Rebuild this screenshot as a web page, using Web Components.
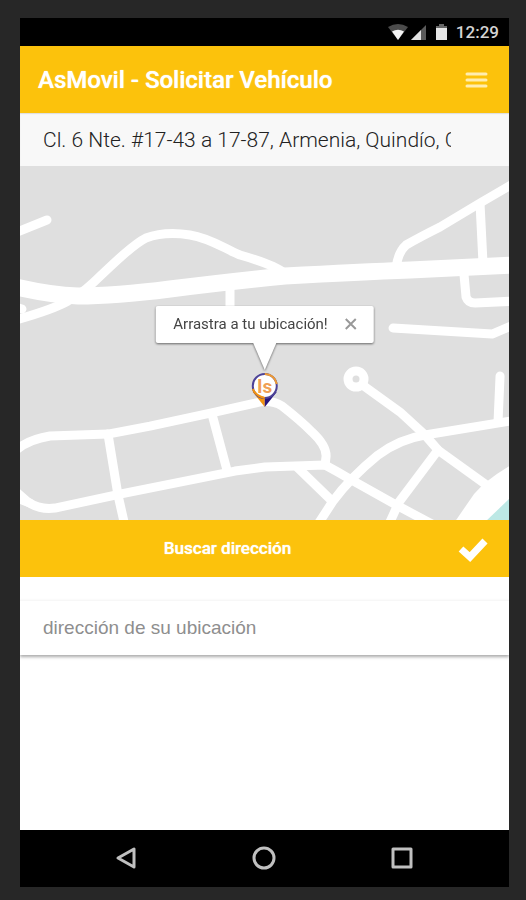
<!DOCTYPE html>
<html lang="es">
<head>
<meta charset="utf-8">
<meta name="viewport" content="width=device-width, initial-scale=1">
<title>AsMovil - Solicitar Vehículo</title>
<style>
  html, body { margin: 0; }
  body { background: #272727; font-family: Roboto, "Liberation Sans", sans-serif; --brand: #fcc20c; }
</style>
</head>
<body>
<as-phone>
  <status-bar slot="status" time="12:29"></status-bar>
  <app-header>AsMovil - Solicitar Vehículo</app-header>
  <address-bar value="Cl. 6 Nte. #17-43 a 17-87, Armenia, Quindío, Colombia"></address-bar>
  <city-map><map-popup slot="marker">Arrastra a tu ubicación!</map-popup><map-pin slot="marker"></map-pin></city-map>
  <search-bar>Buscar dirección</search-bar>
  <address-form placeholder="dirección de su ubicación"></address-form>
  <nav-bar slot="nav"></nav-bar>
</as-phone>

<script>
const define = (name, html, setup) => {
  const template = document.createElement('template');
  template.innerHTML = '<style>*{box-sizing:border-box}button{background:none;border:0;padding:0;color:inherit;font:inherit;cursor:pointer}svg{display:block}</style>' + html;
  customElements.define(name, class extends HTMLElement {
    constructor() {
      super();
      this.attachShadow({ mode: 'open' }).append(template.content.cloneNode(true));
    }
    connectedCallback() { if (setup) setup(this, this.shadowRoot); }
  });
};

define('as-phone', `
<style>
  :host { display: flex; box-sizing: border-box; min-height: 100vh; padding: 18px 17px 13px 20px; }
  .device { flex: 1; min-width: 0; display: flex; flex-direction: column; background: #000; }
  main { flex: 1; display: flex; flex-direction: column; background: #fff; }
</style>
<div class="device">
  <slot name="status"></slot>
  <main><slot></slot></main>
  <slot name="nav"></slot>
</div>`);

define('status-bar', `
<style>
  :host { display: flex; justify-content: flex-end; align-items: center; height: 28px; padding-right: 10px; color: #d4d4d4; font-size: 17px; font-weight: 500; line-height: 28px; }
  svg { margin-right: 8px; }
</style>
<svg width="60" height="18" viewBox="0 0 60 18" aria-hidden="true">
  <path d="M0 4Q10-2 20 4L10 17Z" fill="#4b4b4b"/><path d="M4 8.500Q10 5 16 8.500L10 17Z" fill="#f4f4f4"/>
  <path d="M38 2V17H23Z" fill="#5b5b5b"/><path d="M33 7V17H23Z" fill="#e2e2e2"/>
  <path d="M51 1h5v2h3v14H48V3h3Z" fill="#e6e6e6"/><path d="M51 1h5v2h3v2H48V3h3Z" fill="#666"/>
</svg>
<span></span>`, (el, root) => root.querySelector('span').textContent = el.getAttribute('time'));

define('app-header', `
<style>
  :host { display: flex; align-items: center; justify-content: space-between; height: 67px; padding: 0 20px 0 18px; background: var(--brand); color: #fff; }
  h1 { margin: 0; font-size: 24px; font-weight: 500; line-height: 32px; text-shadow: 0 0 1px #fff; }
</style>
<h1><slot></slot></h1>
<button aria-label="Menú"><svg width="25" height="20" viewBox="0 0 25 20" stroke="#ffedb0" stroke-width="3" stroke-linecap="round"><path d="M3 4H22M3 10H22M3 16H22"/></svg></button>`);

define('address-bar', `
<style>
  :host { display: flex; height: 53px; padding: 0 58px 0 23px; background: #f8f8f8; box-shadow: inset 0 1px 1px #ddd; }
  input { flex: 1; min-width: 0; border: 0; padding: 0; background: none; color: #222; font: 300 21px/28px Roboto, "Liberation Sans", sans-serif; outline: 0; }
</style>
<input type="text" aria-label="Dirección actual">`, (el, root) => root.querySelector('input').value = el.getAttribute('value'));

define('city-map', `
<style>
  :host { display: block; position: relative; flex: 7 1 0; min-height: 260px; overflow: hidden; background: #dfdfdf; }
  .roads { position: absolute; inset: 0; width: 100%; height: 100%; }
  .marker { position: absolute; left: 50%; bottom: 32%; transform: translateX(-50%); display: flex; flex-direction: column; align-items: center; }
</style>
<svg class="roads" viewBox="20 166 489 354" preserveAspectRatio="xMidYMid slice" fill="none" stroke="#fff" stroke-width="9" stroke-linecap="round" stroke-linejoin="round" aria-hidden="true">
  <path stroke-width="17" d="M12 286Q50 295 78 296Q115 296 170 289Q235 281 285 276Q360 272 410 270L516 265"/>
  <path d="M12 234L47 220"/>
  <path d="M12 321Q52 310 68 301Q80 295 94 282C116 261 134 244 146 238Q165 231 190 235C210 238 225 249 240 255Q275 265 284 273"/>
  <path d="M12 306L22 309"/>
  <path d="M230 287V310"/>
  <path d="M396 268Q398 252 406 245Q420 237 440 227L480 203L516 182"/>
  <path d="M480 204L483 264"/>
  <path d="M464 275L466 297Q468 303 475 303L516 301"/>
  <path d="M393 328L492 334L516 324"/>
  <path d="M12 454Q25 440 50 436L108 434L150 426L215 412L255 403Q271 399 282 406Q300 420 312 432Q327 446 326 457L325 465"/>
  <path d="M108 434L118 495L125 526"/>
  <path d="M212 414L227 470"/>
  <path d="M12 488L28 502Q40 510 55 508L120 494L180 482L235 471L265 467L325 465Q338 472 350 479L400 507L432 524"/>
  <path d="M12 496L30 503"/>
  <path d="M298 468L331 500"/>
  <path d="M318 524L333 501Q350 478 378 455Q400 439 425 435L516 420"/>
  <circle cx="356" cy="379" r="8"/>
  <path d="M364 386L400 412L424 434L438 450L488 486"/>
  <path d="M438 450L399 502L389 524"/>
  <path d="M500 376L498 421"/>
  <path d="M456 520L474 494Q486 479 516 462V528H456Z" fill="#fff" stroke="none"/>
  <path d="M487 520L510 498V520Z" fill="#bce8e5" stroke="none"/>
</svg>
<div class="marker"><slot name="marker"></slot></div>`);

define('map-popup', `
<style>
  :host { display: block; filter: drop-shadow(0 1px 1px #666); }
  .card { display: flex; align-items: center; gap: 16px; height: 37px; padding: 0 16px 0 18px; border-radius: 2px; background: #fff; color: #444; font-size: 15px; font-weight: 400; line-height: 20px; white-space: nowrap; }
  .tail { width: 24px; height: 28px; margin: -1px auto 1px; }
</style>
<div class="card"><span><slot></slot></span><button aria-label="Cerrar"><svg width="14" height="14" viewBox="0 0 14 14" stroke="#999" stroke-width="2"><path d="M2 2L12 12M12 2L2 12"/></svg></button></div>
<svg class="tail" viewBox="0 0 24 28"><path d="M0 0H24L12 28Z" fill="#fff"/></svg>`);

define('map-pin', `
<style>
  :host { display: block; }
</style>
<svg width="28" height="36" viewBox="0 0 28 36" role="img" aria-label="Tu ubicación">
  <path d="M14 36L2 21L14 21Z" fill="#f2930f"/><path d="M14 36L26 21L14 21Z" fill="#28167d"/>
  <circle cx="14" cy="15" r="12" fill="#fff" stroke="#4d4398" stroke-width="2"/>
  <path d="M14 3A12 12 0 0 1 26 13" fill="none" stroke="#ee9b33" stroke-width="2"/>
  <path d="M2 18Q5 25 14 27" fill="none" stroke="#f2930f" stroke-width="2"/>
  <text x="14" y="22" text-anchor="middle" font-family="Roboto, sans-serif" font-size="19" font-weight="700" fill="#f0a055">ls</text>
</svg>`);

define('search-bar', `
<style>
  :host { display: flex; align-items: center; height: 57px; padding: 0 20px 0 18px; background: var(--brand); color: #fff; }
  .search { flex: 1; padding-right: 40px; font-size: 17px; font-weight: 500; line-height: 57px; text-shadow: 0 0 1px #fff; }
</style>
<button class="search"><slot></slot></button>
<button aria-label="Confirmar"><svg width="32" height="26" viewBox="0 0 32 26" fill="none" stroke="#fff" stroke-width="7" stroke-linejoin="miter"><path d="M4 13L13 21L28 5"/></svg></button>`);

define('address-form', `
<style>
  :host { display: flow-root; flex: 5 1 0; overflow: hidden; }
  label { display: flex; height: 55px; margin-top: 23px; padding: 0 23px; border-top: 1px solid #f7f7f7; box-shadow: 0 2px 3px #aaa; }
  input { flex: 1; min-width: 0; padding: 0; border: 0; background: none; color: #444; font: 400 19px/28px "Liberation Sans", sans-serif; outline: 0; }
  input::placeholder { color: #8e8e8e; opacity: 1; }
</style>
<label><input type="text" aria-label="Dirección de su ubicación"></label>`, (el, root) => root.querySelector('input').placeholder = el.getAttribute('placeholder'));

define('nav-bar', `
<style>
  :host { display: block; background: #000; }
  nav { display: flex; justify-content: center; align-items: center; gap: 110px; height: 57px; padding: 0 2px 2px 0; }
</style>
<nav aria-label="Sistema">
  <button aria-label="Atrás"><svg width="28" height="28" viewBox="0 0 28 28" fill="none" stroke="#c0c0c0" stroke-width="3" stroke-linejoin="round"><path d="M22 5V23L6 14Z"/></svg></button>
  <button aria-label="Inicio"><svg width="28" height="28" viewBox="0 0 28 28" fill="none" stroke="#c0c0c0" stroke-width="3"><circle cx="14" cy="14" r="10"/></svg></button>
  <button aria-label="Recientes"><svg width="28" height="28" viewBox="0 0 28 28" fill="none" stroke="#c0c0c0" stroke-width="3" stroke-linejoin="round"><path d="M5 5H23V23H5Z"/></svg></button>
</nav>`);
</script>
</body>
</html>
